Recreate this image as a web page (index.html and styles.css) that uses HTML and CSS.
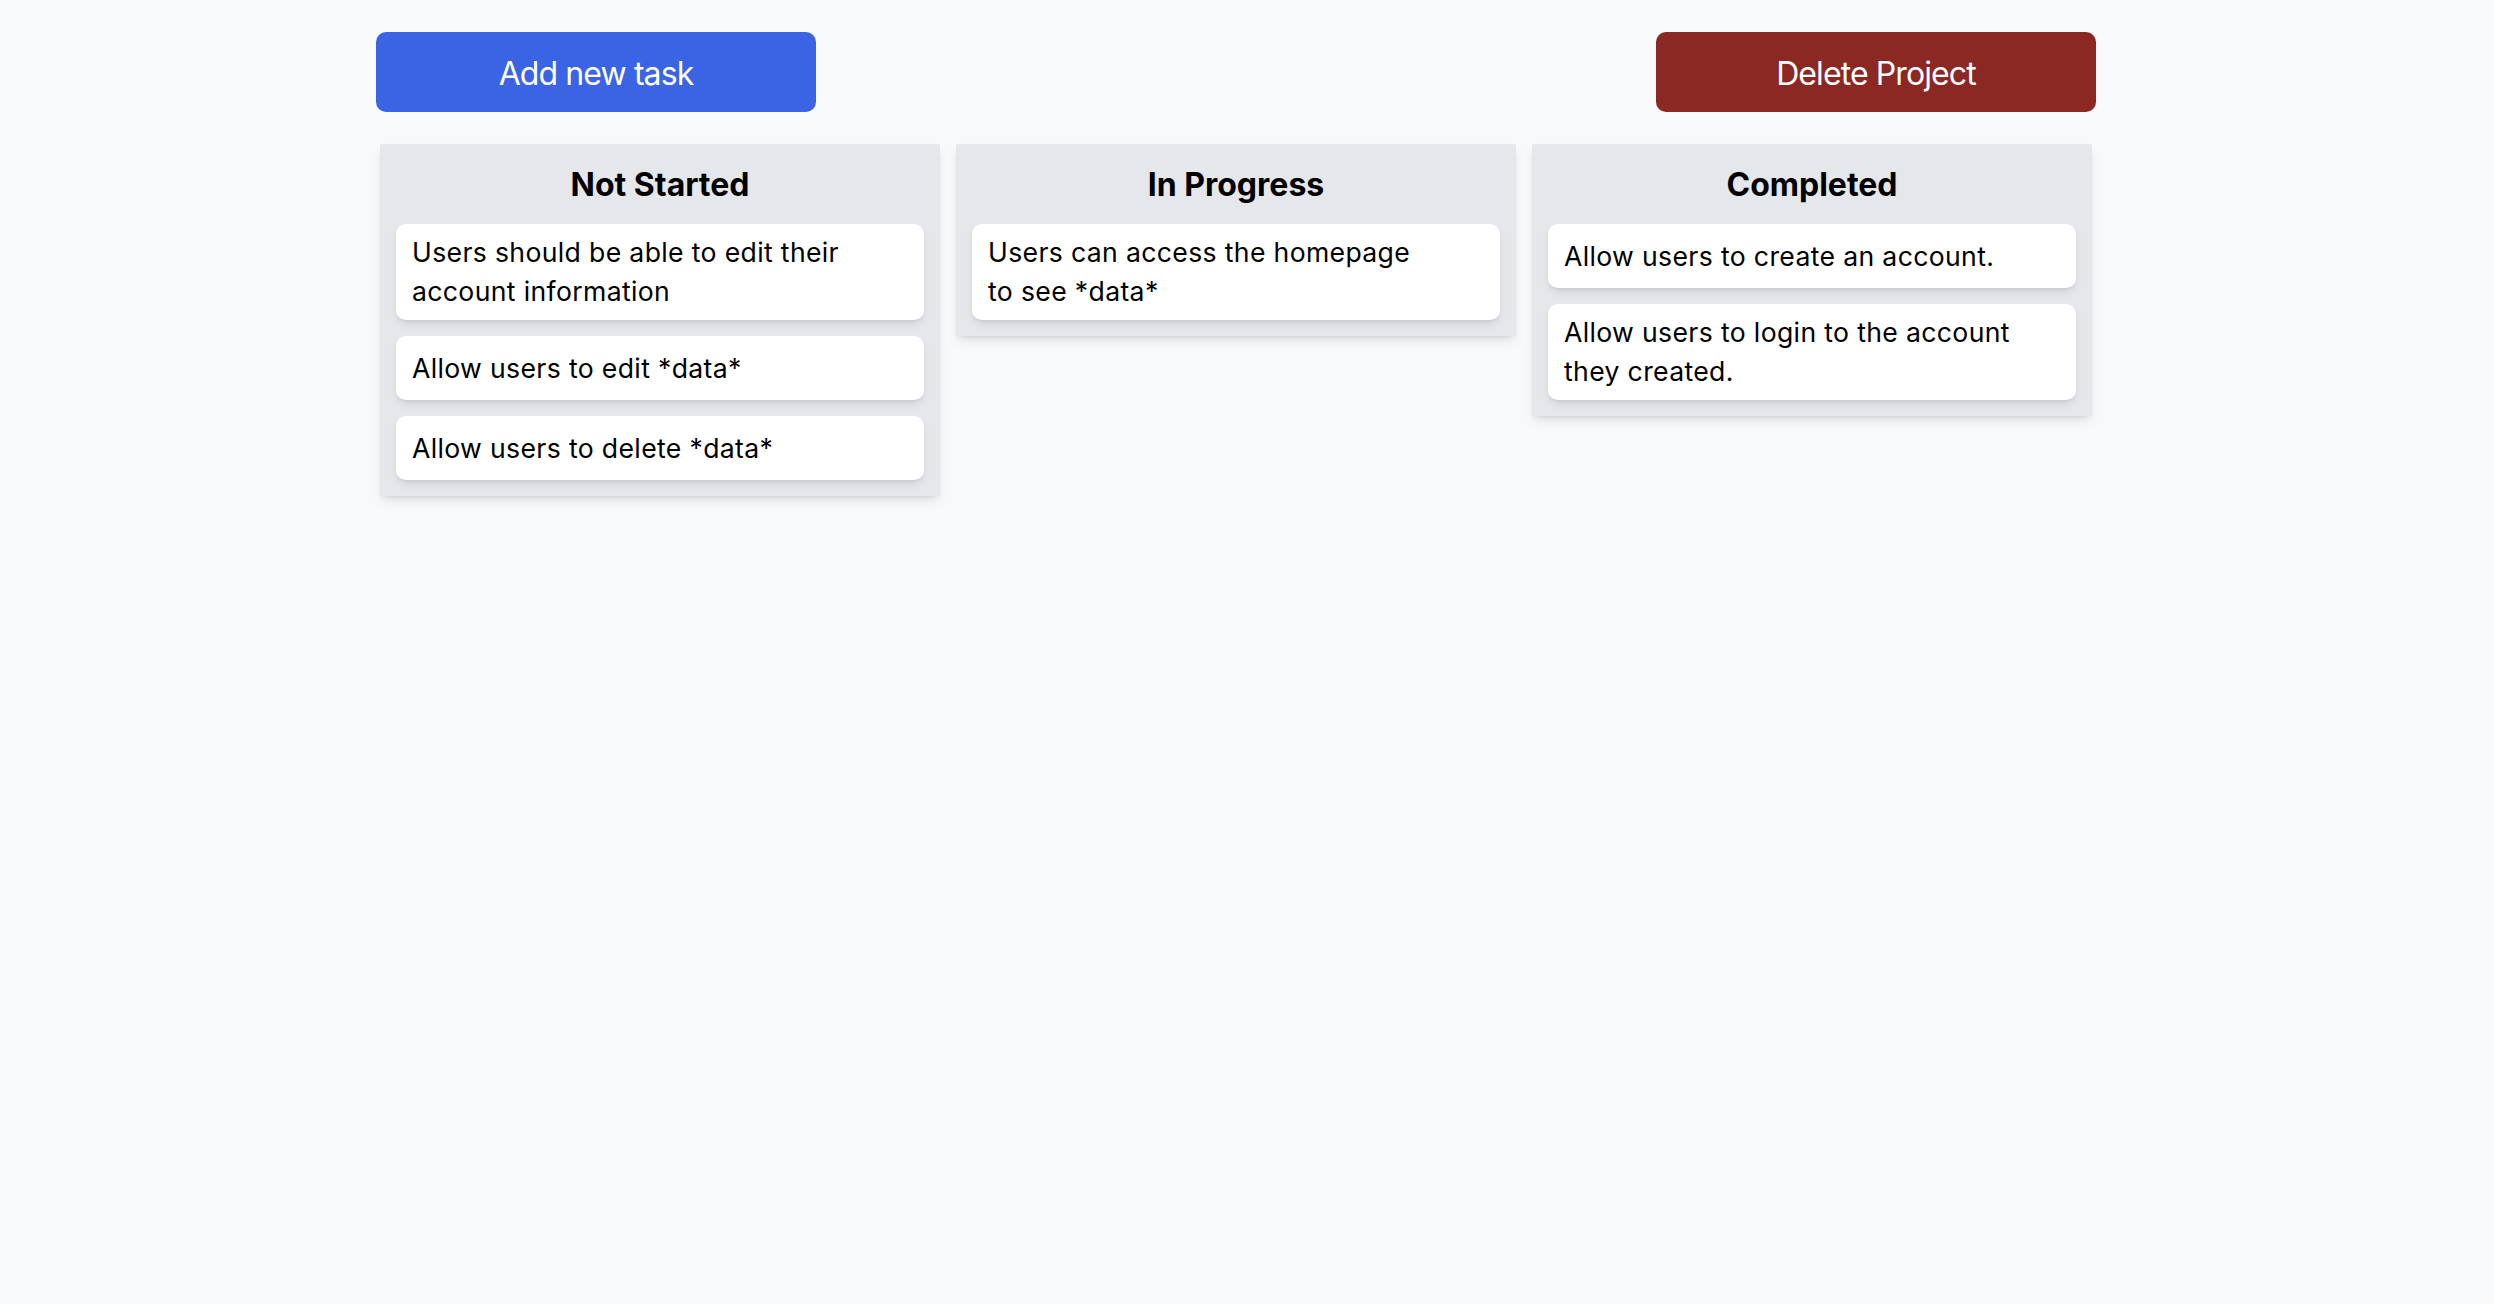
FILE: index.html
```html
<!DOCTYPE html>
<html lang="en">
<head>
<meta charset="utf-8">
<title>Project Board</title>
<link rel="stylesheet" href="styles.css">
</head>
<body>
<div class="page">
  <div class="toolbar">
    <button class="btn btn-add">Add new task</button>
    <button class="btn btn-delete">Delete Project</button>
  </div>
  <div class="board">
    <section class="column">
      <h2 class="column-title">Not Started</h2>
      <div class="cards">
        <div class="card"><p class="card-text">Users should be able to edit their account information</p></div>
        <div class="card"><p class="card-text">Allow users to edit *data*</p></div>
        <div class="card"><p class="card-text">Allow users to delete *data*</p></div>
      </div>
    </section>
    <section class="column">
      <h2 class="column-title">In Progress</h2>
      <div class="cards">
        <div class="card"><p class="card-text">Users can access the homepage<br>to see *data*</p></div>
      </div>
    </section>
    <section class="column">
      <h2 class="column-title">Completed</h2>
      <div class="cards">
        <div class="card"><p class="card-text">Allow users to create an account.</p></div>
        <div class="card"><p class="card-text">Allow users to login to the account they created.</p></div>
      </div>
    </section>
  </div>
</div>
</body>
</html>
```

FILE: styles.css
```css
* {
  box-sizing: border-box;
}

html, body {
  margin: 0;
  padding: 0;
}

body {
  background: #f8f9fb;
  font-family: Inter, "Noto Sans", "Liberation Sans", sans-serif;
  color: #000;
  min-height: 1304px;
}

.page {
  margin-left: 376px;
  width: 1720px;
  padding-top: 32px;
}

.toolbar {
  display: flex;
  justify-content: space-between;
}

.btn {
  width: 440px;
  height: 80px;
  border: none;
  border-radius: 10px;
  color: #fff;
  font-family: Inter, "Noto Sans", "Liberation Sans", sans-serif;
  font-size: 32px;
  font-weight: 400;
  letter-spacing: -0.9px;
  line-height: 48px;
  padding: 3px 0 0;
  cursor: pointer;
}

.btn-add {
  background: #3a64e3;
}

.btn-delete {
  background: #8b2823;
}

.board {
  display: grid;
  grid-template-columns: repeat(3, 560px);
  gap: 16px;
  align-items: start;
  margin: 32px 4px 0;
}

.column {
  background: #e5e7eb;
  padding: 19px 16px 16px;
  box-shadow: 0 6px 10px -2px rgba(0, 0, 0, 0.1), 0 3px 6px -3px rgba(0, 0, 0, 0.1);
}

.column-title {
  margin: 0 0 16px;
  text-align: center;
  font-size: 32px;
  line-height: 44.8px;
  font-weight: 700;
}

.cards {
  display: flex;
  flex-direction: column;
  gap: 16px;
}

.card {
  background: #fff;
  border-radius: 10px;
  min-height: 64px;
  padding: 9.6px 16px;
  display: flex;
  align-items: center;
  box-shadow: 0 6px 10px -2px rgba(0, 0, 0, 0.09), 0 3px 6px -3px rgba(0, 0, 0, 0.09);
}

.card-text {
  margin: 0;
  font-size: 26.6px;
  letter-spacing: 0.35px;
  line-height: 38.4px;
  font-weight: 400;
}
```
